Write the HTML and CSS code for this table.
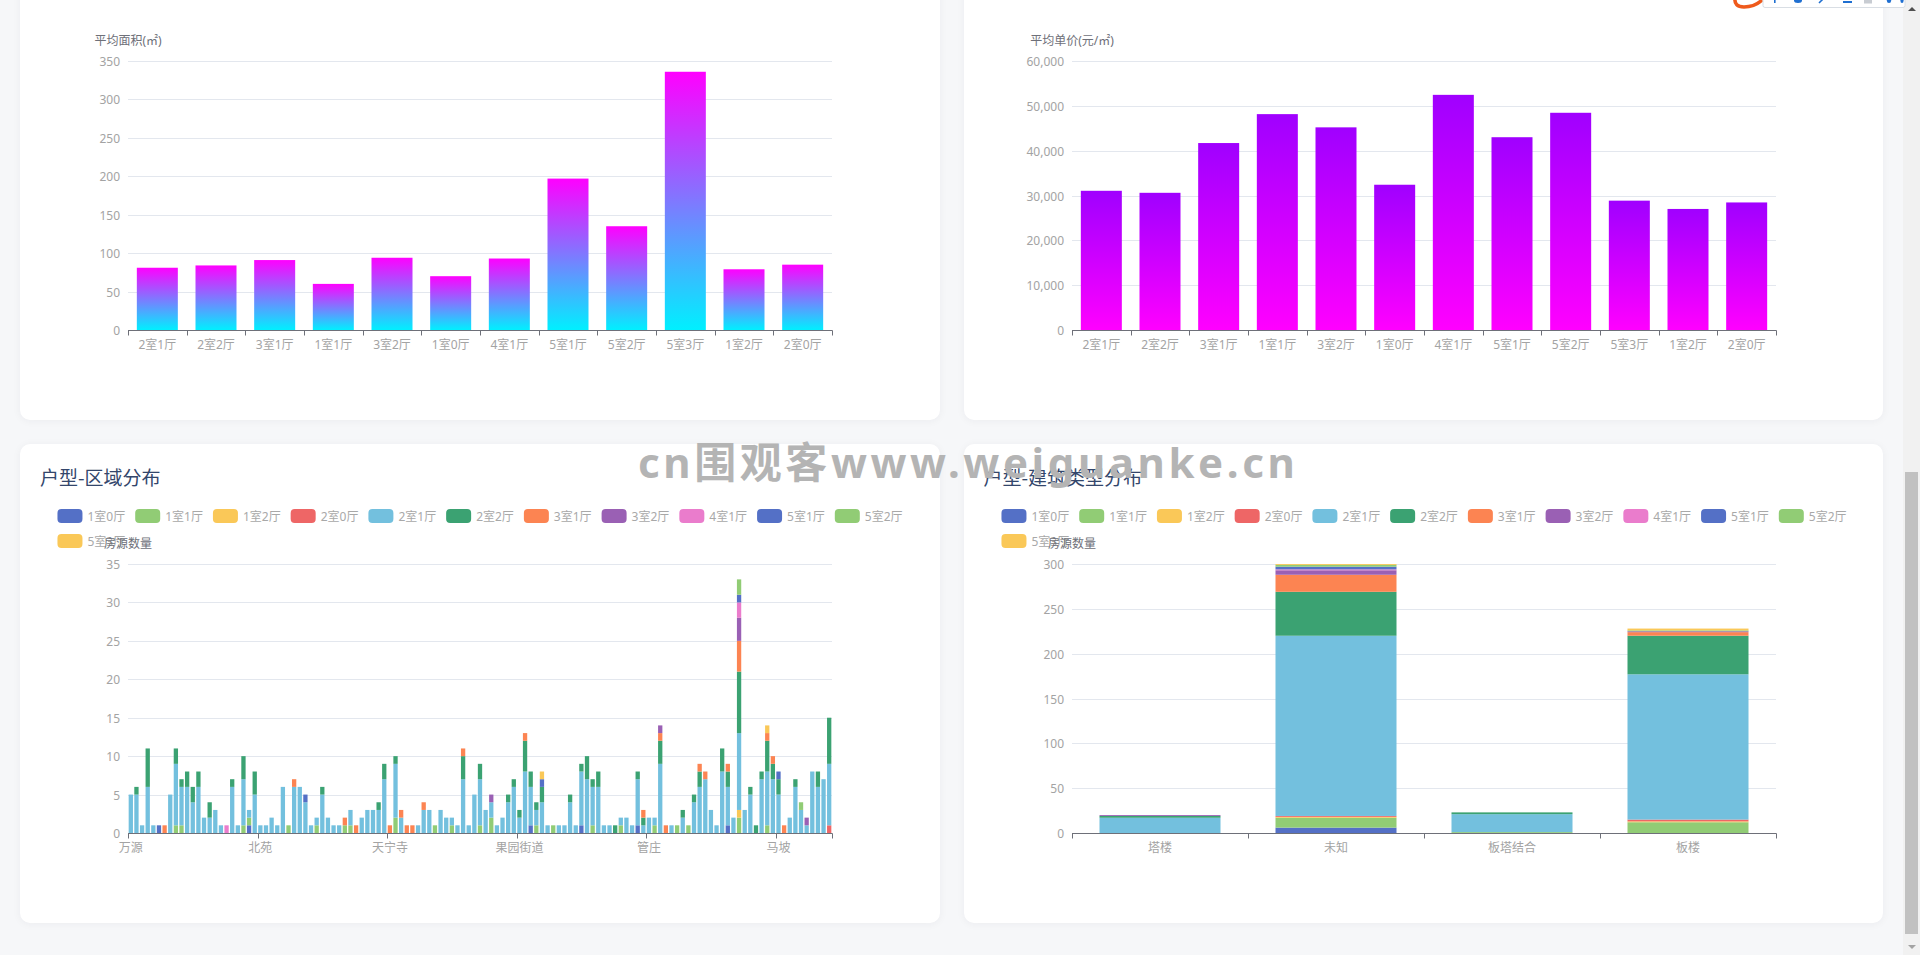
FILE: index.html
```html
<!DOCTYPE html>
<html lang="zh-CN">
<head>
<meta charset="utf-8">
<title>户型分析</title>
<link rel="stylesheet" href="styles.css">
</head>
<body>
<div class="viewport">
  <main class="page">
    <div class="grid">
      <section class="card">
        <h2 class="card-title">户型-平均面积</h2>
        <div class="chart" id="c-area"></div>
      </section>
      <section class="card">
        <h2 class="card-title">户型-平均单价</h2>
        <div class="chart" id="c-price"></div>
      </section>
      <section class="card">
        <h2 class="card-title">户型-区域分布</h2>
        <div class="chart" id="c-region"></div>
      </section>
      <section class="card">
        <h2 class="card-title">户型-建筑类型分布</h2>
        <div class="chart" id="c-build"></div>
      </section>
    </div>
  </main>
  <div class="scrollbar">
    <div class="sb-btn"><span class="sb-up"></span></div>
    <div class="sb-track"><div class="sb-thumb"></div></div>
    <div class="sb-btn"><span class="sb-down"></span></div>
  </div>
</div>
<div class="watermark">cn围观客www.weiguanke.cn</div>
<div class="ext-toolbar">
  <svg width="190" height="12" viewBox="0 0 190 12">
    <path d="M5 -2 Q4 7 14 7 Q24 7 31 1" fill="none" stroke="#ef5a1c" stroke-width="3.6" stroke-linecap="round"/>
    <rect x="33" y="-3" width="142" height="10.5" rx="2" fill="#ffffff" stroke="#d9dee4" stroke-width="1"/>
    <rect x="44" y="0" width="1.6" height="3" fill="#1f6fd1"/>
    <ellipse cx="68" cy="0.5" rx="4" ry="2.5" fill="#1f6fd1"/>
    <path d="M89 3 L93 -1" stroke="#1f6fd1" stroke-width="1.6"/>
    <rect x="113" y="1" width="9" height="2" fill="#1f6fd1"/>
    <rect x="134" y="0" width="8" height="3.5" fill="#c8ccd2"/>
    <ellipse cx="159" cy="0.5" rx="2.2" ry="2.5" fill="#1f6fd1"/>
    <ellipse cx="172" cy="0.5" rx="1.6" ry="2.5" fill="#1f6fd1"/>
  </svg>
</div>
<script src="app.js"></script>
</body>
</html>
```

FILE: styles.css
```css
* { box-sizing: border-box; }
html, body { margin: 0; padding: 0; }
body {
  background: #f6f7f9;
  font-family: "Noto Sans", "Noto Sans CJK SC", sans-serif;
  overflow: hidden;
  height: 955px;
  position: relative;
}
.viewport {
  display: flex;
  height: 955px;
  overflow: hidden;
}
.page {
  flex: 1;
  min-width: 0;
  padding: 0 20px;
  margin-top: -59px;
}
.grid {
  display: grid;
  grid-template-columns: 1fr 1fr;
  gap: 24px;
}
.card {
  background: #ffffff;
  border-radius: 10px;
  box-shadow: 0 1px 8px rgba(30, 40, 60, 0.05);
  padding: 20px 20px 30px;
  height: 479px;
  overflow: hidden;
}
.card-title {
  margin: 0 0 14px;
  font-size: 19px;
  line-height: 26px;
  font-weight: 400;
  color: #33466b;
  font-family: "Noto Sans CJK SC", sans-serif;
}
.chart { height: 389px; width: 880px; }
.chart-svg { display: block; overflow: visible; }
.chart-svg text {
  font-family: "Noto Sans", "Noto Sans CJK SC", sans-serif;
  font-size: 12px;
  dominant-baseline: central;
}
.chart-svg .ylab, .chart-svg .xlab { fill: #a3a3a3; }
.chart-svg .leg { fill: #a8a8a8; }
.chart-svg .yname { fill: #6e7079; }
.chart-svg .gridline { stroke: #e3e7ee; stroke-width: 1; }
.chart-svg .axisline { stroke: #6e7079; stroke-width: 1; }

.scrollbar {
  width: 17px;
  flex: none;
  background: #f1f1f1;
  display: flex;
  flex-direction: column;
}
.sb-btn {
  height: 17px;
  flex: none;
  display: flex;
  align-items: center;
  justify-content: center;
}
.sb-up {
  width: 0; height: 0;
  border-left: 4px solid transparent;
  border-right: 4px solid transparent;
  border-bottom: 4px solid #505050;
}
.sb-down {
  width: 0; height: 0;
  border-left: 4px solid transparent;
  border-right: 4px solid transparent;
  border-top: 4px solid #a3a3a3;
}
.sb-track {
  flex: 1;
  padding: 455px 2px 4px;
  display: flex;
}
.sb-thumb {
  flex: 1;
  background: #c1c1c1;
}

.watermark {
  position: absolute;
  left: 638px;
  top: 438px;
  font-family: "Noto Sans", "Noto Sans CJK SC", sans-serif;
  font-weight: 700;
  font-size: 42px;
  line-height: 48px;
  letter-spacing: 3.6px;
  color: #b4b4b4;
  white-space: nowrap;
  pointer-events: none;
}
.ext-toolbar {
  position: absolute;
  left: 1730px;
  top: 0;
  height: 12px;
  line-height: 0;
}
```

FILE: app.js
```js
(function () {
  var NS = 'http://www.w3.org/2000/svg';
  var PAL = ['#5470c6', '#91cc75', '#fac858', '#ee6666', '#73c0de', '#3ba272', '#fc8452', '#9a60b4', '#ea7ccc', '#5470c6', '#91cc75', '#fac858'];
  var TYPES = ['1室0厅', '1室1厅', '1室2厅', '2室0厅', '2室1厅', '2室2厅', '3室1厅', '3室2厅', '4室1厅', '5室1厅', '5室2厅', '5室3厅'];
  var G = { w: 880, h: 389, l: 88, r: 792, t: 60, b: 329 };

  function el(tag, attrs, parent) {
    var e = document.createElementNS(NS, tag);
    for (var k in attrs) e.setAttribute(k, attrs[k]);
    if (parent) parent.appendChild(e);
    return e;
  }
  function text(parent, x, y, s, cls, anchor) {
    var t = el('text', { x: x, y: y, 'class': cls, 'text-anchor': anchor || 'middle' }, parent);
    t.textContent = s;
    return t;
  }
  function makeSvg(id) {
    var host = document.getElementById(id);
    var s = el('svg', { width: G.w, height: G.h, viewBox: '0 0 ' + G.w + ' ' + G.h, 'class': 'chart-svg' });
    host.appendChild(s);
    return s;
  }
  function yAxis(svg, max, step, fmt) {
    var n = Math.round(max / step);
    for (var i = 0; i <= n; i++) {
      var y = Math.round(G.b - (G.b - G.t) * i / n) + 0.5;
      if (i > 0) el('line', { x1: G.l, x2: G.r, y1: y, y2: y, 'class': 'gridline' }, svg);
      text(svg, G.l - 8, y, fmt(i * step), 'ylab', 'end');
    }
  }
  function yName(svg, name) {
    text(svg, G.l, G.t - 21, name, 'yname', 'middle');
  }
  function xAxis(svg, cats, step) {
    var n = cats.length;
    var cw = (G.r - G.l) / n;
    var y = G.b + 0.5;
    el('line', { x1: G.l, x2: G.r + 0.5, y1: y, y2: y, 'class': 'axisline' }, svg);
    for (var i = 0; i <= n; i += step) {
      var x = Math.round(G.l + i * cw) + 0.5;
      el('line', { x1: x, x2: x, y1: y, y2: y + 5, 'class': 'axisline' }, svg);
    }
    if (n % step !== 0) {
      el('line', { x1: G.r + 0.5, x2: G.r + 0.5, y1: y, y2: y + 5, 'class': 'axisline' }, svg);
    }
    for (var j = 0; j < n; j += step) {
      text(svg, G.l + (j + 0.5) * cw, G.b + 14, cats[j], 'xlab', 'middle');
    }
  }
  function legend(svg) {
    var g = el('g', {}, svg);
    var items = [];
    TYPES.forEach(function (t, i) {
      var ig = el('g', {}, g);
      el('rect', { x: 0, y: -7, width: 25, height: 14, rx: 4, ry: 4, fill: PAL[i] }, ig);
      var tt = text(ig, 30, 0, t, 'leg', 'start');
      items.push({ g: ig, w: 30 + tt.getComputedTextLength() });
    });
    var avail = G.w - 10, x = 0, row = 0, rows = [0], pos = [];
    items.forEach(function (it) {
      if (x > 0 && x + it.w > avail) { row++; x = 0; rows.push(0); }
      pos.push([x, row]);
      x += it.w;
      rows[row] = x;
      x += 10;
    });
    var gw = Math.max.apply(null, rows);
    var left = (G.w - gw) / 2;
    items.forEach(function (it, i) {
      it.g.setAttribute('transform', 'translate(' + (left + pos[i][0]) + ',' + (12 + pos[i][1] * 25) + ')');
    });
  }
  function gradBars(svg, vals, max, id, c1, c2) {
    var defs = el('defs', {}, svg);
    var lg = el('linearGradient', { id: id, x1: 0, y1: 0, x2: 0, y2: 1 }, defs);
    el('stop', { offset: 0, 'stop-color': c1 }, lg);
    el('stop', { offset: 1, 'stop-color': c2 }, lg);
    var cw = (G.r - G.l) / vals.length, k = (G.b - G.t) / max, bw = 41;
    vals.forEach(function (v, i) {
      var h = v * k;
      el('rect', { x: G.l + (i + 0.5) * cw - bw / 2, y: G.b - h, width: bw, height: h, fill: 'url(#' + id + ')' }, svg);
    });
  }
  function stacked(svg, data, max, bw) {
    var cw = (G.r - G.l) / data.length, k = (G.b - G.t) / max;
    data.forEach(function (segs, i) {
      var acc = 0, x = G.l + (i + 0.5) * cw - bw / 2;
      segs.forEach(function (sv) {
        var y0 = G.b - acc * k;
        acc += sv[1];
        var y1 = G.b - acc * k;
        el('rect', { x: x, y: y1, width: bw, height: y0 - y1, fill: PAL[sv[0]] }, svg);
      });
    });
  }
  function parse(s) {
    return s.split(',').map(function (p) { var a = p.split(':'); return [+a[0], +a[1]]; });
  }

  var CATS = ['2室1厅', '2室2厅', '3室1厅', '1室1厅', '3室2厅', '1室0厅', '4室1厅', '5室1厅', '5室2厅', '5室3厅', '1室2厅', '2室0厅'];

  /* 平均面积 */
  var s1 = makeSvg('c-area');
  yAxis(s1, 350, 50, function (v) { return String(v); });
  gradBars(s1, [81, 84, 91, 60, 94, 70, 93, 197, 135, 336, 79, 85], 350, 'gArea', '#ff00ff', '#00f0ff');
  xAxis(s1, CATS, 1);
  yName(s1, '平均面积(㎡)');

  /* 平均单价 */
  var s2 = makeSvg('c-price');
  yAxis(s2, 60000, 10000, function (v) { return v.toLocaleString('en-US'); });
  gradBars(s2, [31050, 30600, 41700, 48150, 45200, 32400, 52450, 43000, 48450, 28850, 27000, 28450], 60000, 'gPrice', '#a000ff', '#ff00ff');
  xAxis(s2, CATS, 1);
  yName(s2, '平均单价(元/㎡)');

  /* 区域分布 */
  var REGION = [
    '4:5', '4:5,5:1', '4:1', '4:6,5:5', '4:1', '0:1', '6:1', '4:5', '1:1,4:8,5:2', '1:1,4:5,5:1',
    '4:6,5:2', '4:4,5:2', '4:6,5:2', '4:2', '4:2,5:2', '4:3', '4:1', '8:1', '4:6,5:1', '4:1',
    '1:1,4:6,5:3', '0:1,1:1,4:1', '4:5,5:3', '4:1', '4:1', '4:2', '4:1', '4:6', '1:1', '4:6,6:1',
    '4:6', '4:4,9:1', '4:1', '1:1,4:1', '4:5,5:1', '4:2', '4:1', '4:1', '1:1,6:1', '1:1,4:2',
    '6:1', '4:2', '4:3', '4:3', '4:3,5:1', '4:7,5:2', '6:1', '1:2,4:7,5:1', '4:2,6:1', '6:1',
    '6:1', '4:1', '4:3,6:1', '4:3', '1:1', '4:3', '4:2', '1:1,4:1', '4:1', '4:7,5:3,6:1',
    '4:1', '4:5', '1:1,4:6,5:2', '4:3', '1:2,4:2,7:1', '4:1', '4:2', '4:4,5:1', '4:6,5:1', '4:2,5:1',
    '4:8,5:4,6:1', '0:1,4:5,5:2', '1:1,4:2,5:1', '4:4,5:2,9:1,11:1', '4:1', '1:1', '4:1', '4:1', '4:4,5:1', '4:1',
    '0:1,4:7,5:1', '4:7,5:3', '1:1,4:5,5:1', '4:6,5:2', '4:1', '4:1', '5:1', '1:1,4:1', '4:2', '4:1',
    '0:1,4:6,5:1', '4:1,5:1,6:1', '4:2', '1:1,4:1', '4:9,5:3,6:1,7:1', '6:1', '4:1', '1:1', '4:2,5:1', '1:1',
    '4:4,5:1', '4:6,5:2,6:1', '4:7,6:1', '4:3', '4:1', '4:8,5:3', '0:1,4:5,5:2,6:1', '4:2', '1:2,2:1,4:10,5:8,6:4,7:3,8:2,9:1,10:2', '4:3',
    '4:5,5:1', '5:1', '4:7,5:1', '1:1,4:7,5:4,6:1,11:1', '4:7,5:2,6:1', '4:5,5:2,9:1', '6:1', '4:2', '4:6,5:1', '4:3,10:1',
    '4:1,7:1', '4:8', '4:6,5:2', '4:7', '3:1,4:8,5:6'
  ].map(parse);
  var regionCats = REGION.map(function () { return ''; });
  regionCats[0] = '万源'; regionCats[23] = '北苑'; regionCats[46] = '天宁寺';
  regionCats[69] = '果园街道'; regionCats[92] = '管庄'; regionCats[115] = '马坡';
  var s3 = makeSvg('c-region');
  yAxis(s3, 35, 5, function (v) { return String(v); });
  stacked(s3, REGION, 35, 4.3);
  xAxis(s3, regionCats, 23);
  legend(s3);
  yName(s3, '房源数量');

  /* 建筑类型分布 */
  var BUILD = [
    '4:17,5:2,7:1',
    '0:6,1:11,2:1,3:1,4:201,5:49,6:19,7:5,8:1,9:3,10:2,11:1',
    '1:1,4:20,5:2',
    '1:12,2:1,3:2,4:162,5:43,6:4,7:1,10:1,11:2'
  ].map(parse);
  var s4 = makeSvg('c-build');
  yAxis(s4, 300, 50, function (v) { return String(v); });
  stacked(s4, BUILD, 300, 121);
  xAxis(s4, ['塔楼', '未知', '板塔结合', '板楼'], 1);
  legend(s4);
  yName(s4, '房源数量');
})();
```
